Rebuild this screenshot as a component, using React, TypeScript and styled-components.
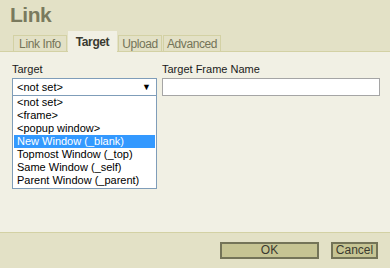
import React, { useState } from 'react';
import styled, { createGlobalStyle } from 'styled-components';

const GlobalStyle = createGlobalStyle`
  html, body {
    margin: 0;
    padding: 0;
    background: #e3e1c6;
  }
  body {
    font-family: "Liberation Sans", Arial, sans-serif;
  }
`;

const targets = [
  '<not set>',
  '<frame>',
  '<popup window>',
  'New Window (_blank)',
  'Topmost Window (_top)',
  'Same Window (_self)',
  'Parent Window (_parent)',
];

const tabs = [
  { label: 'Link Info', width: 54 },
  { label: 'Target', width: 49 },
  { label: 'Upload', width: 44 },
  { label: 'Advanced', width: 58 },
];

const App: React.FC = () => {
  const [activeTab, setActiveTab] = useState('Target');
  const [selected] = useState('<not set>');
  const [hovered, setHovered] = useState('New Window (_blank)');

  return (
    <>
      <GlobalStyle />
      <Dialog>
        <Header>
          <Title>Link</Title>
          <TabRow>
            {tabs.map(t => (
              <Tab
                key={t.label}
                $active={t.label === activeTab}
                $width={t.width}
                onClick={() => setActiveTab(t.label)}
              >
                {t.label}
              </Tab>
            ))}
          </TabRow>
        </Header>

        <Body>
          <Fields>
            <TargetField>
              <Label>Target</Label>
              <SelectWrap>
                <SelectBox>
                  <span>{selected}</span>
                  <Arrow>▼</Arrow>
                </SelectBox>
                <DropList>
                  {targets.map(t => (
                    <Option key={t} $highlight={t === hovered} onMouseEnter={() => setHovered(t)}>
                      {t}
                    </Option>
                  ))}
                </DropList>
              </SelectWrap>
            </TargetField>
            <FrameField>
              <Label>Target Frame Name</Label>
              <TextInput type="text" />
            </FrameField>
          </Fields>
        </Body>

        <Footer>
          <Button $wide>OK</Button>
          <Button>Cancel</Button>
        </Footer>
      </Dialog>
    </>
  );
};

const Dialog = styled.div`
  width: 390px;
  height: 268px;
  display: flex;
  flex-direction: column;
  background: #e3e1c6;
  overflow: hidden;
`;

const Header = styled.div`
  display: flex;
  flex-direction: column;
  padding: 3px 0 0 10px;
`;

const Title = styled.div`
  font-family: "Liberation Sans", Arial, sans-serif;
  font-size: 21px;
  font-weight: bold;
  letter-spacing: -0.5px;
  color: #7a7a5e;
  line-height: 24px;
  height: 28px;
`;

const TabRow = styled.div`
  display: flex;
  align-items: flex-end;
  gap: 1px;
  padding-left: 3px;
  margin-bottom: -1px;
`;

const Tab = styled.div<{ $active?: boolean; $width: number }>`
  box-sizing: border-box;
  width: ${p => p.$width}px;
  height: ${p => (p.$active ? '21px' : '17px')};
  display: flex;
  align-items: center;
  justify-content: center;
  font-size: 12px;
  letter-spacing: -0.4px;
  font-weight: ${p => (p.$active ? 'bold' : 'normal')};
  color: ${p => (p.$active ? '#3a3a30' : '#747458')};
  background: ${p => (p.$active ? '#f1f0e4' : '#e3e1c6')};
  border: 1px solid ${p => (p.$active ? '#f1f0e4' : '#d3d1a4')};
  border-bottom: none;
  position: relative;
  z-index: ${p => (p.$active ? 2 : 1)};
  cursor: pointer;
`;

const Body = styled.div`
  flex: 1;
  background: #f1f0e4;
  border-top: 1px solid #d3d1a4;
  border-bottom: 1px solid #d3d1a4;
  padding: 10px 10px 0 12px;
  position: relative;
  z-index: 1;
`;

const Fields = styled.div`
  display: flex;
  gap: 5px;
`;

const TargetField = styled.div`
  width: 145px;
  display: flex;
  flex-direction: column;
`;

const FrameField = styled.div`
  flex: 1;
  display: flex;
  flex-direction: column;
`;

const Label = styled.label`
  font-size: 11px;
  color: #1a1a1a;
  line-height: 14px;
  margin-bottom: 2px;
`;

const SelectWrap = styled.div`
  position: relative;
`;

const SelectBox = styled.div`
  box-sizing: border-box;
  height: 18px;
  border: 1px solid #7f9db9;
  background: #fff;
  display: flex;
  align-items: center;
  justify-content: space-between;
  padding: 0 5px 0 4px;
  font-size: 11px;
  color: #000;
`;

const Arrow = styled.span`
  font-size: 9px;
  color: #000;
`;

const DropList = styled.div`
  position: absolute;
  top: 18px;
  left: 0;
  right: 0;
  box-sizing: border-box;
  background: #fff;
  border: 1px solid #7f9db9;
  border-top: none;
  padding: 0 1px 1px;
  z-index: 5;
`;

const Option = styled.div<{ $highlight?: boolean }>`
  height: 13px;
  line-height: 13px;
  font-size: 11px;
  padding-left: 3px;
  white-space: nowrap;
  color: ${p => (p.$highlight ? '#fff' : '#000')};
  background: ${p => (p.$highlight ? '#3399ff' : 'transparent')};
  cursor: default;
`;

const TextInput = styled.input`
  box-sizing: border-box;
  height: 18px;
  border: 1px solid #a5a5a5;
  background: #fff;
  margin: 0;
  padding: 0 3px;
  font-size: 11px;
  outline: none;
`;

const Footer = styled.div`
  height: 35px;
  display: flex;
  align-items: center;
  justify-content: flex-end;
  gap: 12px;
  padding-right: 12px;
  background: #e3e1c6;
`;

const Button = styled.button<{ $wide?: boolean }>`
  box-sizing: border-box;
  width: ${p => (p.$wide ? '99px' : '47px')};
  height: 17px;
  padding: 0;
  border: 2px solid #747458;
  background: #c6c493;
  color: #3a3a30;
  font-family: "Liberation Sans", Arial, sans-serif;
  font-size: 12px;
  line-height: 13px;
  cursor: pointer;
`;

export default App;
